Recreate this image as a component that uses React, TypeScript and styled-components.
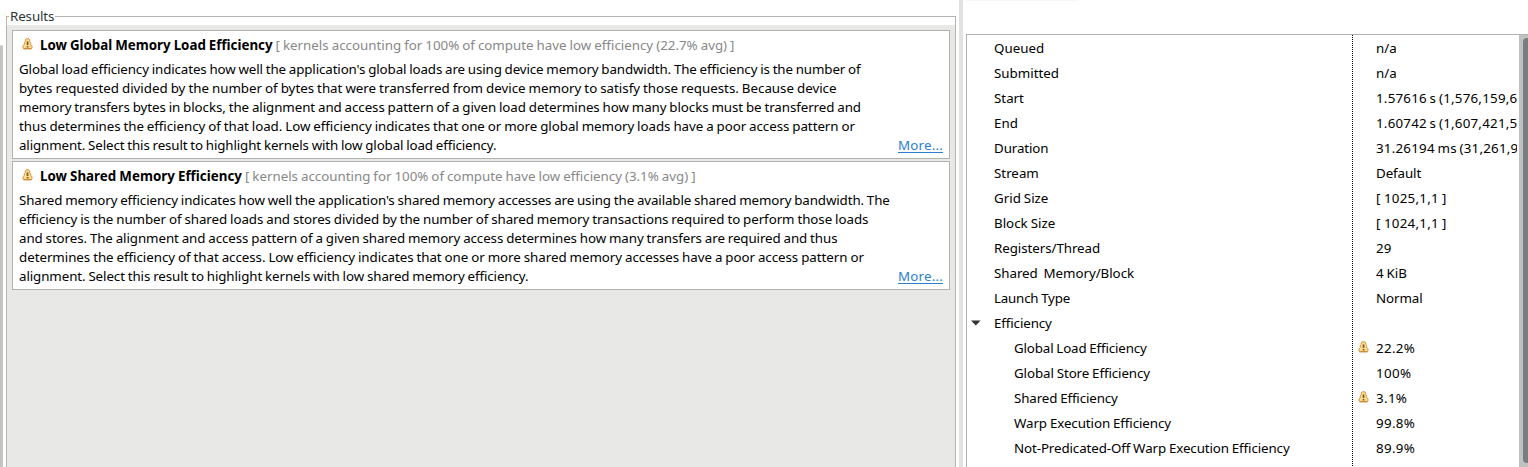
import React from 'react';
import styled, { createGlobalStyle } from 'styled-components';

const GlobalStyle = createGlobalStyle`
  * { box-sizing: border-box; }
  body { margin: 0; background: #fff; overflow: hidden; }
`;

const Window = styled.div`
  display: flex;
  width: 1528px;
  height: 467px;
  overflow: hidden;
  background: #fff;
  color: #000;
  font: 13.333px/19px "Noto Sans", sans-serif;
  white-space: pre;
  word-spacing: -0.47px;
`;

const EdgeBar = styled.div`
  flex: none;
  width: 3px;
  margin-top: 45px;
  background: #c3c4c4;
  border-top: 1px solid #dedede;
`;

const ResultsGroup = styled.section`
  display: flex;
  flex: none;
  flex-direction: column;
  width: 950px;
  margin-left: 3px;
  padding-top: 7px;
`;

const GroupHeader = styled.header`
  display: flex;
  height: 18px;
  flex: none;
`;

const HeaderRule = styled.div<{ $side: 'left' | 'right' }>`
  margin-top: 9px;
  border-top: 1px solid #b4b4b0;
  border-${p => p.$side}: 1px solid #b4b4b0;
  ${p => (p.$side === 'left' ? 'width: 3px;' : 'flex: 1;')}
`;

const GroupTitle = styled.span`
  width: 46px;
  padding-left: 1px;
  color: #2e3436;
  letter-spacing: -0.1px;
`;

const GroupBody = styled.div`
  display: flex;
  flex-direction: column;
  gap: 2px;
  flex: 1;
  padding: 5px 5px 0;
  background: #e8e8e7;
  border: solid #b4b4b0;
  border-width: 0 1px;
`;

const Card = styled.article`
  height: 129px;
  padding: 5px 6px 0;
  background: #fff;
  border: 1px solid #b2b2ae;
`;

const CardHeader = styled.div`
  display: flex;
  align-items: flex-start;
  height: 24px;
`;

const CardIcon = styled.span`
  display: flex;
  width: 21px;
  padding: 2px 0 0 3px;
`;

const CardTitle = styled.h2<{ $spacing: number }>`
  margin: 0;
  font: inherit;
  font-weight: 700;
  letter-spacing: ${p => p.$spacing}px;
`;

const CardNote = styled.span<{ $spacing: number }>`
  margin-left: 3px;
  color: #888;
  letter-spacing: ${p => p.$spacing}px;
`;

const CardLine = styled.div<{ $spacing: number }>`
  display: flex;
  height: 19px;
  letter-spacing: ${p => p.$spacing}px;
`;

const MoreLink = styled.a`
  margin: 0 0 0 auto;
  letter-spacing: 0.2px;
  color: #2a7fd0;
  text-decoration: underline;
  text-underline-offset: 2px;
`;

const Sash = styled.div`
  flex: none;
  width: 4px;
  margin-left: 3px;
  background: #e2e2e2;
`;

const PropertiesPane = styled.section`
  display: flex;
  flex-direction: column;
  flex: 1;
  min-width: 0;
  padding-left: 3px;
`;

const TabEdge = styled.div`
  width: 112px;
  height: 1px;
  margin-bottom: 33px;
  border-bottom: 1px solid #f6f6f6;
`;

const Tree = styled.div`
  display: flex;
  flex: 1;
  border: solid #b2b2ae;
  border-width: 1px 0 0 1px;
`;

const NameColumn = styled.div`
  flex: none;
  width: 385px;
  padding-top: 1px;
`;

const ValueColumn = styled.div`
  flex: none;
  width: 167px;
  padding-top: 1px;
  background: repeating-linear-gradient(#000 0 1px, #fff 1px 2px) left / 1px 100% no-repeat;
`;

const NameCell = styled.div<{ $child?: boolean; $spacing?: number }>`
  display: flex;
  height: 25px;
  padding-left: ${p => (p.$child ? 47 : 4)}px;
  line-height: 25px;
  letter-spacing: ${p => p.$spacing ?? 0}px;
`;

const Twistie = styled.span`
  display: flex;
  align-items: center;
  width: 23px;
`;

const ValueCell = styled.div<{ $spacing?: number }>`
  display: flex;
  width: 165px;
  height: 25px;
  overflow: hidden;
  line-height: 25px;
  letter-spacing: ${p => p.$spacing ?? 0}px;
`;

const ValueText = styled.span<{ $tight: boolean }>`
  word-spacing: ${p => (p.$tight ? -1 : -0.47)}px;
`;

const ValueIcon = styled.span`
  display: flex;
  flex: none;
  width: 24px;
  padding: 5px 0 0 6px;
`;

const ScrollTrack = styled.div`
  flex: none;
  width: 9px;
  padding: 3px 0 4px 4px;
  overflow: hidden;
  background: #c0c1c1;
`;

const ScrollThumb = styled.div`
  width: 8px;
  height: 100%;
  border-radius: 4px;
  background: #7a7d7d;
`;

const Warning = () => (
  <svg width="11" height="12" viewBox="0 0 11 12">
    <path
      d="M4.2 .8h2.6l.9 1v1.7l1 1.3v1.5l1.3 1.6V10l-.7.7H1.7L1 10V7.9l1.3-1.6V4.8l1-1.3V1.8z"
      fill="#fbdc8c"
      stroke="#d6964a"
    />
    <path d="M1.6 10.8h7.8" stroke="#c8822f" />
    <path d="M4.7 3.4h1.7V7H4.7zM4.7 8h1.7v1.4H4.7z" fill="#83591f" />
  </svg>
);

type Line = [text: string, spacing: number];

interface Result {
  title: Line;
  note: Line;
  lines: Line[];
}

const results: Result[] = [
  {
    title: ['Low Global Memory Load Efficiency', 0],
    note: ['[ kernels accounting for 100% of compute have low efficiency (22.7% avg) ]', 0],
    lines: [
      ["Global load efficiency indicates how well the application's global loads are using device memory bandwidth. The efficiency is the number of", -0.117],
      ['bytes requested divided by the number of bytes that were transferred from device memory to satisfy those requests. Because device', -0.005],
      ['memory transfers bytes in blocks, the alignment and access pattern of a given load determines how many blocks must be transferred and', -0.075],
      ['thus determines the efficiency of that load. Low efficiency indicates that one or more global memory loads have a poor access pattern or', -0.049],
      ['alignment. Select this result to highlight kernels with low global load efficiency.', -0.118],
    ],
  },
  {
    title: ['Low Shared Memory Efficiency', 0.03],
    note: ['[ kernels accounting for 100% of compute have low efficiency (3.1% avg) ]', -0.01],
    lines: [
      ["Shared memory efficiency indicates how well the application's shared memory accesses are using the available shared memory bandwidth. The", -0.113],
      ['efficiency is the number of shared loads and stores divided by the number of shared memory transactions required to perform those loads', -0.06],
      ['and stores. The alignment and access pattern of a given shared memory access determines how many transfers are required and thus', -0.083],
      ['determines the efficiency of that access. Low efficiency indicates that one or more shared memory accesses have a poor access pattern or', -0.041],
      ['alignment. Select this result to highlight kernels with low shared memory efficiency.', -0.09],
    ],
  },
];

interface Property {
  name: string;
  value?: string;
  kind?: 'child' | 'group';
  warn?: boolean;
  nameSpacing?: number;
  valueSpacing?: number;
}

const properties: Property[] = [
  { name: 'Queued', value: 'n/a' },
  { name: 'Submitted', value: 'n/a' },
  { name: 'Start', value: '1.57616 s (1,576,159,646 ns)', valueSpacing: 0.23 },
  { name: 'End', value: '1.60742 s (1,607,421,586 ns)', valueSpacing: 0.23 },
  { name: 'Duration', value: '31.26194 ms (31,261,940 ns)', nameSpacing: -0.1, valueSpacing: 0.23 },
  { name: 'Stream', value: 'Default', valueSpacing: -0.1 },
  { name: 'Grid Size', value: '[ 1025,1,1 ]', valueSpacing: 0.26 },
  { name: 'Block Size', value: '[ 1024,1,1 ]', valueSpacing: 0.26 },
  { name: 'Registers/Thread', value: '29', nameSpacing: -0.06, valueSpacing: 0.2 },
  { name: 'Shared  Memory/Block', value: '4 KiB', nameSpacing: -0.05 },
  { name: 'Launch Type', value: 'Normal', nameSpacing: -0.2, valueSpacing: -0.1 },
  { name: 'Efficiency', kind: 'group', nameSpacing: -0.1 },
  { name: 'Global Load Efficiency', value: '22.2%', kind: 'child', warn: true, nameSpacing: -0.14, valueSpacing: 0.35 },
  { name: 'Global Store Efficiency', value: '100%', kind: 'child', nameSpacing: -0.09, valueSpacing: 0.35 },
  { name: 'Shared Efficiency', value: '3.1%', kind: 'child', warn: true, nameSpacing: -0.12, valueSpacing: 0.35 },
  { name: 'Warp Execution Efficiency', value: '99.8%', kind: 'child', nameSpacing: -0.08, valueSpacing: 0.35 },
  { name: 'Not-Predicated-Off Warp Execution Efficiency', value: '89.9%', kind: 'child', nameSpacing: -0.1, valueSpacing: 0.35 },
];

export default function App() {
  return (
    <Window>
      <GlobalStyle />
      <EdgeBar />
      <ResultsGroup>
        <GroupHeader>
          <HeaderRule $side="left" />
          <GroupTitle>Results</GroupTitle>
          <HeaderRule $side="right" />
        </GroupHeader>
        <GroupBody>
          {results.map(({ title, note, lines }) => (
            <Card key={title[0]}>
              <CardHeader>
                <CardIcon><Warning /></CardIcon>
                <CardTitle $spacing={title[1]}>{title[0]}</CardTitle>
                <CardNote $spacing={note[1]}>{note[0]}</CardNote>
              </CardHeader>
              {lines.map(([text, spacing], i) => (
                <CardLine key={text} $spacing={spacing}>
                  <span>{text}</span>
                  {i === lines.length - 1 && <MoreLink>More...</MoreLink>}
                </CardLine>
              ))}
            </Card>
          ))}
        </GroupBody>
      </ResultsGroup>
      <Sash />
      <PropertiesPane>
        <TabEdge />
        <Tree>
          <NameColumn>
            {properties.map(p => (
              <NameCell key={p.name} $child={p.kind === 'child'} $spacing={p.nameSpacing}>
                {p.kind !== 'child' && (
                  <Twistie>
                    {p.kind === 'group' && (
                      <svg width="10" height="8" viewBox="0 0 10 8">
                        <path d="M0 .5h9.6L4.8 5.4z" fill="#2e3436" />
                      </svg>
                    )}
                  </Twistie>
                )}
                {p.name}
              </NameCell>
            ))}
          </NameColumn>
          <ValueColumn>
            {properties.map(p => (
              <ValueCell key={p.name} $spacing={p.valueSpacing}>
                <ValueIcon>{p.warn && <Warning />}</ValueIcon>
                <ValueText $tight={!!p.value?.endsWith('ns)')}>{p.value}</ValueText>
              </ValueCell>
            ))}
          </ValueColumn>
          <ScrollTrack>
            <ScrollThumb />
          </ScrollTrack>
        </Tree>
      </PropertiesPane>
    </Window>
  );
}
